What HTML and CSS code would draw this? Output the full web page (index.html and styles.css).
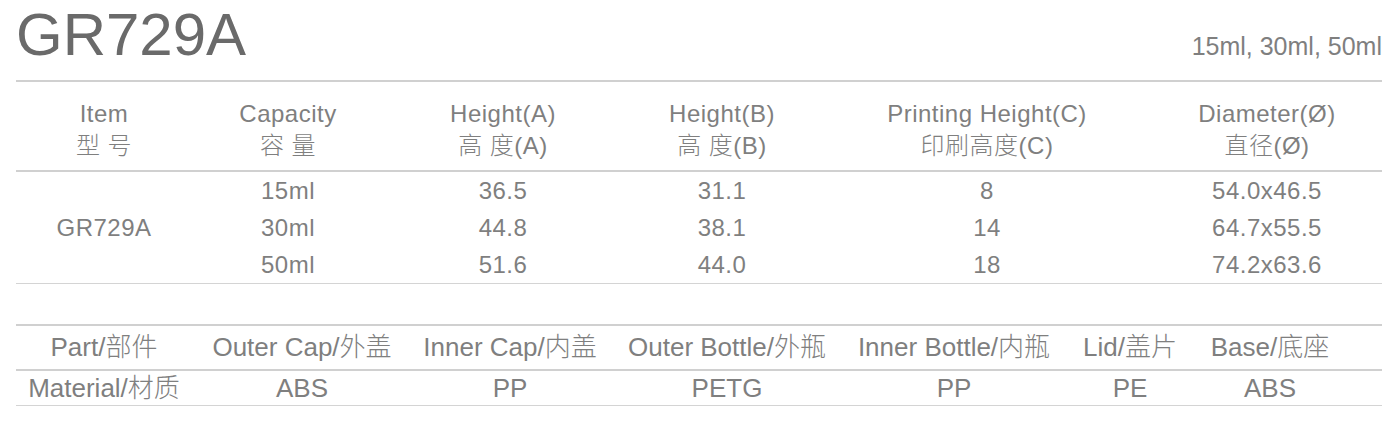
FILE: index.html
```html
<!DOCTYPE html>
<html lang="zh-CN">
<head>
<meta charset="utf-8">
<title>GR729A</title>
<link rel="stylesheet" href="styles.css">
</head>
<body>
<div class="page">
  <header class="top">
    <h1 class="title">GR729A</h1>
    <div class="caps">15ml, 30ml, 50ml</div>
  </header>

  <section class="spec">
    <div class="spec-head">
      <div class="cell">Item<br>型 号</div>
      <div class="cell">Capacity<br>容 量</div>
      <div class="cell">Height(A)<br>高 度(A)</div>
      <div class="cell">Height(B)<br>高 度(B)</div>
      <div class="cell">Printing Height(C)<br>印刷高度(C)</div>
      <div class="cell">Diameter(Ø)<br>直径(Ø)</div>
    </div>
    <div class="spec-body">
      <div class="cell model">GR729A</div>
      <div class="cell">15ml</div>
      <div class="cell">36.5</div>
      <div class="cell">31.1</div>
      <div class="cell">8</div>
      <div class="cell">54.0x46.5</div>
      <div class="cell">30ml</div>
      <div class="cell">44.8</div>
      <div class="cell">38.1</div>
      <div class="cell">14</div>
      <div class="cell">64.7x55.5</div>
      <div class="cell">50ml</div>
      <div class="cell">51.6</div>
      <div class="cell">44.0</div>
      <div class="cell">18</div>
      <div class="cell">74.2x63.6</div>
    </div>
  </section>

  <section class="parts">
    <div class="parts-row parts-head">
      <div class="cell">Part/部件</div>
      <div class="cell">Outer Cap/外盖</div>
      <div class="cell">Inner Cap/内盖</div>
      <div class="cell">Outer Bottle/外瓶</div>
      <div class="cell">Inner Bottle/内瓶</div>
      <div class="cell">Lid/盖片</div>
      <div class="cell">Base/底座</div>
      <div class="cell"></div>
    </div>
    <div class="parts-row parts-mat">
      <div class="cell">Material/材质</div>
      <div class="cell">ABS</div>
      <div class="cell">PP</div>
      <div class="cell">PETG</div>
      <div class="cell">PP</div>
      <div class="cell">PE</div>
      <div class="cell">ABS</div>
      <div class="cell"></div>
    </div>
  </section>
</div>
</body>
</html>
```

FILE: styles.css
```css
html, body {
  margin: 0;
  padding: 0;
  background: #ffffff;
}

body {
  font-family: "Liberation Sans", "Noto Sans CJK SC", sans-serif;
  font-weight: 300;
  color: #7f7f7f;
}

.page {
  padding: 0 15px 0 16px;
}

.top {
  display: flex;
  justify-content: space-between;
  align-items: baseline;
  height: 80px;
  box-sizing: border-box;
  padding-top: 5px;
}

.title {
  margin: 0;
  font-size: 60px;
  line-height: 60px;
  font-weight: 300;
  color: #6a6a6a;
}

.caps {
  font-size: 25px;
  color: #7f7f7f;
}

.cell {
  text-align: center;
  white-space: nowrap;
}

.spec {
  border-top: 2px solid #d0d0d0;
  border-bottom: 1px solid #d4d4d4;
  font-size: 24px;
  letter-spacing: 0.5px;
}

.spec-head,
.spec-body {
  display: grid;
  grid-template-columns: 176px 192px 238px 200px 330px 1fr;
}

.spec-head {
  padding: 16px 0 8px;
  line-height: 32px;
  border-bottom: 2px solid #d0d0d0;
}

.spec-body {
  grid-template-rows: repeat(3, 37px);
  line-height: 37px;
}

.spec-body .model {
  grid-row: 1 / span 3;
  align-self: center;
}

.parts {
  margin-top: 40px;
  border-top: 2px solid #d0d0d0;
  border-bottom: 1px solid #d4d4d4;
  font-size: 26px;
}

.parts-row {
  display: grid;
  grid-template-columns: 176px 220px 196px 238px 216px 136px 144px 1fr;
}

.parts-head {
  line-height: 43px;
  border-bottom: 2px solid #d0d0d0;
}

.parts-mat {
  line-height: 34px;
}
```
